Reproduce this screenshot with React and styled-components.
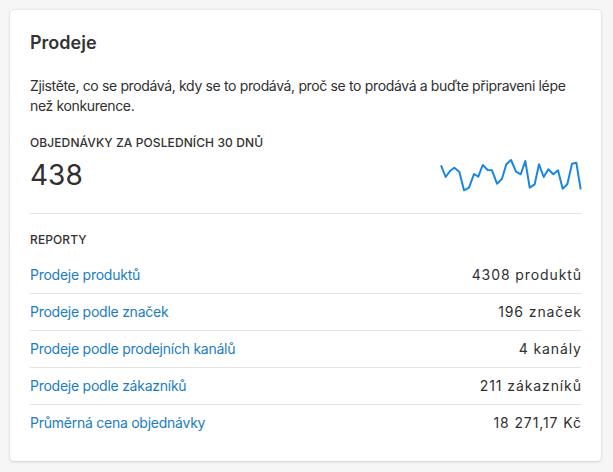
import React from 'react';
import styled, { createGlobalStyle } from 'styled-components';

const GlobalStyle = createGlobalStyle`
  html, body {
    margin: 0;
    padding: 0;
    background: #f6f6f7;
  }
  body {
    font-family: Inter, "Noto Sans", "Liberation Sans", sans-serif;
    color: #303030;
    -webkit-font-smoothing: antialiased;
  }
`;

const Page = styled.div`
  padding: 10px 12px 11px 10px;
`;

const Card = styled.section`
  background: #fff;
  border-radius: 4px;
  box-shadow: 0 0 0 1px rgba(63, 63, 68, 0.05), 0 1px 3px rgba(63, 63, 68, 0.15);
  padding: 21px 20px 20px 20px;
`;

const Title = styled.h2`
  margin: 0;
  font-size: 18px;
  line-height: 24px;
  font-weight: 600;
  color: #333;
`;

const Description = styled.p`
  margin: 21px 0 0;
  font-size: 14px;
  line-height: 20px;
  letter-spacing: -0.35px;
`;

const Subheading = styled.h3`
  margin: ${props => props.$top}px 0 0;
  font-size: 12px;
  line-height: 16px;
  font-weight: 500;
  text-transform: uppercase;
  letter-spacing: 0.1px;
  color: #333;
`;

const StatRow = styled.div`
  display: flex;
  align-items: center;
  justify-content: space-between;
  margin-top: 6px;
  padding-bottom: 20px;
  border-bottom: 1px solid #e1e3e5;
`;

const BigNumber = styled.div`
  font-size: 28px;
  line-height: 32px;
  font-weight: 400;
  color: #303030;
`;

const ReportList = styled.ul`
  list-style: none;
  margin: 9px 0 0;
  padding: 0;
`;

const ReportItem = styled.li`
  display: flex;
  justify-content: space-between;
  align-items: center;
  padding: 9px 0;
  font-size: 14px;
  line-height: 18px;
  border-top: ${props => (props.$first ? 'none' : '1px solid #e1e3e5')};
`;

const ReportLink = styled.a`
  color: #1b7dbf;
  text-decoration: none;
  letter-spacing: -0.25px;
`;

const ReportValue = styled.span`
  color: #303030;
  letter-spacing: 0.9px;
  margin-right: -0.9px;
`;

const points = [
  [441, 164.3], [445.7, 176], [450, 170], [454.3, 166.7], [459.3, 170.7],
  [464, 189.3], [469, 186.7], [474, 173], [478.3, 175.7], [482.7, 164],
  [487.7, 169], [492, 169.3], [497, 182.7], [502, 177.7], [506.3, 163.3],
  [511, 159], [516, 170.7], [520.7, 173.3], [525.3, 160], [529.7, 186.7],
  [534.7, 183.3], [539, 163.3], [543.7, 176], [548.3, 168.3], [553.3, 173.3],
  [558, 169.3], [562.7, 187.7], [567.3, 183.3], [572, 162.7], [576.3, 161.7],
  [580.7, 188.3],
];

const Sparkline = () => {
  const d = points
    .map(([x, y], i) => `${i ? 'L' : 'M'}${(x - 440).toFixed(1)} ${(y - 156).toFixed(1)}`)
    .join(' ');
  return (
    <svg width="142" height="36" viewBox="0 0 142 36" style={{ marginRight: -1 }}>
      <path d={d} fill="none" stroke="#1a86e2" strokeWidth="2" strokeLinejoin="round" />
    </svg>
  );
};

const reports = [
  { label: 'Prodeje produktů', value: '4308 produktů' },
  { label: 'Prodeje podle značek', value: '196 značek' },
  { label: 'Prodeje podle prodejních kanálů', value: '4 kanály' },
  { label: 'Prodeje podle zákazníků', value: '211 zákazníků' },
  { label: 'Průměrná cena objednávky', value: '18 271,17 Kč' },
];

const App = () => (
  <Page>
    <GlobalStyle />
    <Card>
      <Title>Prodeje</Title>
      <Description>
        Zjistěte, co se prodává, kdy se to prodává, proč se to prodává a buďte připraveni lépe než konkurence.
      </Description>
      <Subheading $top={19}>Objednávky za posledních 30 dnů</Subheading>
      <StatRow>
        <BigNumber>438</BigNumber>
        <Sparkline />
      </StatRow>
      <Subheading $top={18}>Reporty</Subheading>
      <ReportList>
        {reports.map((r, i) => (
          <ReportItem key={r.label} $first={i === 0}>
            <ReportLink href="#">{r.label}</ReportLink>
            <ReportValue>{r.value}</ReportValue>
          </ReportItem>
        ))}
      </ReportList>
    </Card>
  </Page>
);

export default App;
